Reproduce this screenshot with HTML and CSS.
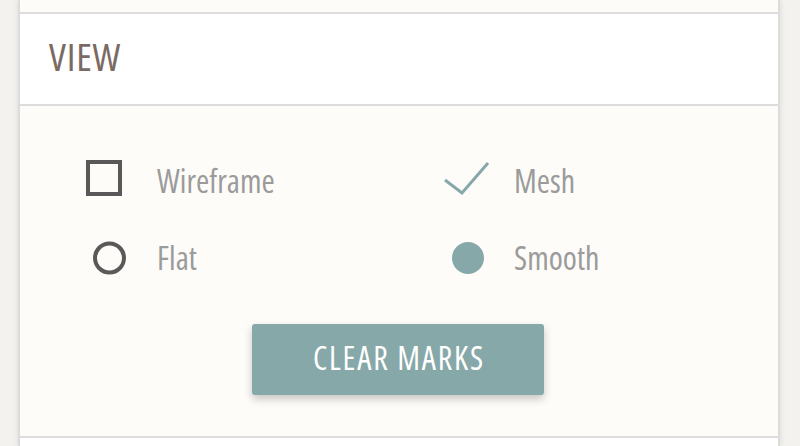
FILE: index.html
```html
<!DOCTYPE html>
<html>
<head>
<meta charset="utf-8">
<link rel="stylesheet" href="styles.css">
</head>
<body>
<div class="panel">
  <div class="section-top"></div>
  <div class="header"><h2 class="title">VIEW</h2></div>
  <div class="body">
    <div class="options">
      <div class="option">
        <span class="icon">
          <svg width="50" height="48" viewBox="0 0 50 48"><rect x="8" y="8" width="32" height="32" fill="none" stroke="#595959" stroke-width="4"/></svg>
        </span>
        <span class="label label-top">Wireframe</span>
      </div>
      <div class="option">
        <span class="icon">
          <svg width="50" height="48" viewBox="0 0 50 48" overflow="visible"><polyline points="8,26 25,39 51,9" fill="none" stroke="#86a8a8" stroke-width="3"/></svg>
        </span>
        <span class="label label-top">Mesh</span>
      </div>
      <div class="option">
        <span class="icon">
          <svg width="50" height="48" viewBox="0 0 50 48"><circle cx="29.5" cy="24" r="14.5" fill="none" stroke="#595959" stroke-width="4"/></svg>
        </span>
        <span class="label label-bottom">Flat</span>
      </div>
      <div class="option">
        <span class="icon">
          <svg width="50" height="48" viewBox="0 0 50 48"><circle cx="31" cy="24" r="16" fill="#86a8a8"/></svg>
        </span>
        <span class="label label-bottom">Smooth</span>
      </div>
    </div>
    <div class="actions">
      <button class="btn">CLEAR MARKS</button>
    </div>
  </div>
  <div class="section-bottom"></div>
</div>
</body>
</html>
```
FILE: styles.css
```css
html, body {
  margin: 0;
  padding: 0;
  background: #f3f2ee;
  height: 446px;
  overflow: hidden;
  font-family: "Open Sans", "DejaVu Sans Condensed", sans-serif;
  font-stretch: 75%;
}
.panel {
  margin-left: 18px;
  width: 758px;
  border-left: 2px solid #dcdcdc;
  border-right: 2px solid #dcdcdc;
  box-shadow: 0 0 6px rgba(0,0,0,0.10);
  background: #fdfcf8;
  height: 446px;
}
.section-top {
  height: 12px;
  background: #fdfcf8;
  border-bottom: 2px solid #dcdcdc;
}
.header {
  height: 90px;
  background: #ffffff;
  border-bottom: 2px solid #dcdcdc;
  padding-left: 29px;
  display: flex;
  align-items: center;
}
.title {
  margin: 0;
  font-weight: 370;
  font-size: 39px;
  letter-spacing: 0.8px;
  color: #7b6a63;
  line-height: 40px;
  padding-bottom: 6px;
}
.body {
  height: 282px;
  padding-top: 48px;
  background: #fdfcf8;
  border-bottom: 2px solid #dcdcdc;
}
.options {
  display: grid;
  grid-template-columns: 357px 1fr;
  row-gap: 32px;
  padding-left: 60px;
}
.option {
  display: flex;
  align-items: flex-start;
  height: 48px;
}
.icon {
  width: 50px;
  height: 48px;
  display: block;
}
.icon svg { display: block; }
.label {
  margin-left: 27px;
  font-size: 32px;
  font-weight: 370;
  color: #9b9b9b;
  height: 48px;
  box-sizing: border-box;
  line-height: 40px;
}
.label-top { padding-top: 7px; }
.label-bottom { padding-top: 4px; }
.actions {
  display: flex;
  justify-content: center;
  margin-top: 42px;
}
.btn {
  width: 292px;
  height: 71px;
  border: none;
  border-radius: 3px;
  background: #86a8a8;
  color: #ffffff;
  font-family: inherit;
  font-stretch: 75%;
  font-size: 32px;
  font-weight: 400;
  letter-spacing: 1.8px;
  line-height: 40px;
  box-shadow: 0 4px 8px rgba(0,0,0,0.22);
  padding: 0 0 4px 2px;
  margin-left: -2px;
  display: flex;
  align-items: center;
  justify-content: center;
}
.section-bottom {
  height: 20px;
  background: #ffffff;
}
```
